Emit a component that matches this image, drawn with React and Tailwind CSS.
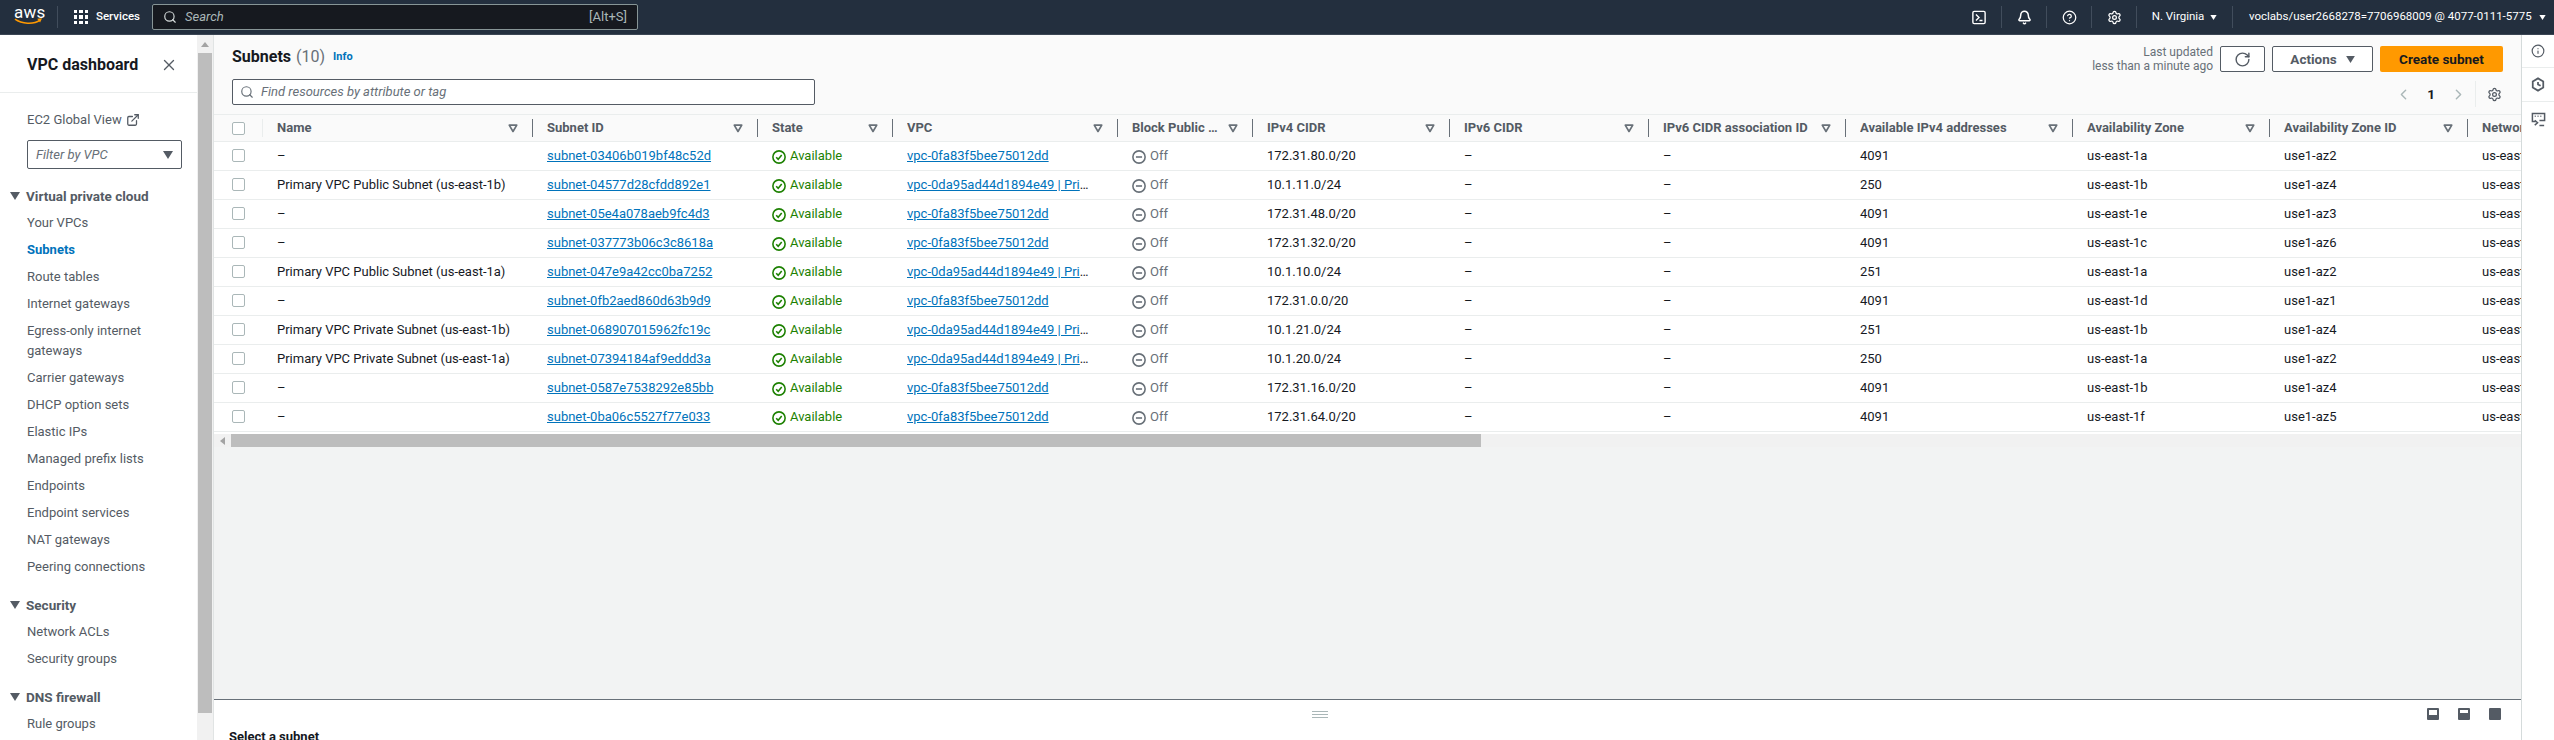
import { Search, X, ExternalLink, RotateCw, Settings, ChevronLeft, ChevronRight, Bell, CircleHelp, Info } from 'lucide-react'

const columns = [
  { label: 'Name', w: 'w-[270px]' },
  { label: 'Subnet ID', w: 'w-[225px]' },
  { label: 'State', w: 'w-[135px]' },
  { label: 'VPC', w: 'w-[225px]' },
  { label: 'Block Public Access', w: 'w-[135px]' },
  { label: 'IPv4 CIDR', w: 'w-[197px]' },
  { label: 'IPv6 CIDR', w: 'w-[199px]' },
  { label: 'IPv6 CIDR association ID', w: 'w-[197px]' },
  { label: 'Available IPv4 addresses', w: 'w-[227px]' },
  { label: 'Availability Zone', w: 'w-[197px]' },
  { label: 'Availability Zone ID', w: 'w-[198px]' },
  { label: 'Network border group', w: 'w-[200px]' },
]

const vpcA = 'vpc-0fa83f5bee75012dd'
const vpcB = 'vpc-0da95ad44d1894e49 | Primary VPC'

const subnets = [
  ['–', 'subnet-03406b019bf48c52d', vpcA, '172.31.80.0/20', '4091', 'us-east-1a', 'use1-az2'],
  ['Primary VPC Public Subnet (us-east-1b)', 'subnet-04577d28cfdd892e1', vpcB, '10.1.11.0/24', '250', 'us-east-1b', 'use1-az4'],
  ['–', 'subnet-05e4a078aeb9fc4d3', vpcA, '172.31.48.0/20', '4091', 'us-east-1e', 'use1-az3'],
  ['–', 'subnet-037773b06c3c8618a', vpcA, '172.31.32.0/20', '4091', 'us-east-1c', 'use1-az6'],
  ['Primary VPC Public Subnet (us-east-1a)', 'subnet-047e9a42cc0ba7252', vpcB, '10.1.10.0/24', '251', 'us-east-1a', 'use1-az2'],
  ['–', 'subnet-0fb2aed860d63b9d9', vpcA, '172.31.0.0/20', '4091', 'us-east-1d', 'use1-az1'],
  ['Primary VPC Private Subnet (us-east-1b)', 'subnet-068907015962fc19c', vpcB, '10.1.21.0/24', '251', 'us-east-1b', 'use1-az4'],
  ['Primary VPC Private Subnet (us-east-1a)', 'subnet-07394184af9eddd3a', vpcB, '10.1.20.0/24', '250', 'us-east-1a', 'use1-az2'],
  ['–', 'subnet-0587e7538292e85bb', vpcA, '172.31.16.0/20', '4091', 'us-east-1b', 'use1-az4'],
  ['–', 'subnet-0ba06c5527f77e033', vpcA, '172.31.64.0/20', '4091', 'us-east-1f', 'use1-az5'],
]

function Caret({ className }) {
  return (
    <svg viewBox="0 0 10 8" className={className}>
      <path d="M0 0h10L5 8z" fill="currentColor" />
    </svg>
  )
}

function Funnel() {
  return (
    <svg viewBox="0 0 12 10" className="w-[10px] h-[9px] shrink-0 text-[#687078]">
      <path d="M1.500 1h9L6 8.600z" fill="none" stroke="currentColor" strokeWidth="2" strokeLinejoin="round" />
    </svg>
  )
}

function Gear({ className }) {
  return <Settings className={className} strokeWidth={2} />
}

function Checkbox() {
  return <div className="w-[13px] h-[13px] rounded-[2px] border border-[#aab7b8] bg-white" />
}

function NavItem({ children, active }) {
  return (
    <div className={`pl-[27px] leading-[20px] ${active ? 'font-bold text-[#0073bb]' : 'text-[#545b64]'}`}>
      {children}
    </div>
  )
}

function NavSection({ title, items, activeItem }) {
  return (
    <div className="flex flex-col gap-[7px] mb-[18px]">
      <div className="flex items-center h-[20px]">
        <Caret className="w-[10px] h-[8px] ml-[10px] mr-[6px] text-[#545b64]" />
        <span className="font-bold text-[13.5px] text-[#545b64]">{title}</span>
      </div>
      {items.map(item => (
        <NavItem key={item} active={item === activeItem}>{item}</NavItem>
      ))}
    </div>
  )
}

function TopIcon({ children }) {
  return (
    <div className="w-[45px] h-[22px] flex items-center justify-center border-r border-[#414d5c]">
      {children}
    </div>
  )
}

function TopBar() {
  return (
    <header className="h-[35px] shrink-0 flex items-center bg-[#232f3e] border-b border-[#3b4654] text-white text-[11.5px]">
      <div className="w-[57px] pl-[14px] h-full flex flex-col justify-center">
        <div className="leading-[13px] text-[17px] -mt-[4px] tracking-[0.3px]">aws</div>
        <svg viewBox="0 0 30 7" className="w-[29px] h-[7px] -mt-[1px]">
          <path d="M1 1c7 5 19 6 26 1" fill="none" stroke="#ff9900" strokeWidth="1.600" />
          <path d="M24 0.600l5-.4-2 4.400z" fill="#ff9900" />
        </svg>
      </div>
      <div className="w-px h-[22px] bg-[#414d5c]" />
      <div className="ml-[16px] grid grid-cols-3 gap-[2px] w-[14px]">
        {Array.from({ length: 9 }).map((_, i) => <div key={i} className="w-[3.4px] h-[3.4px] bg-white" />)}
      </div>
      <span className="ml-[8px] w-[56px] font-medium">Services</span>
      <div className="w-[486px] h-[26px] flex items-center rounded-[2px] border border-[#879596] bg-[#16191f] px-[10px] text-[#aab7b8]">
        <Search size={14} strokeWidth={2} className="text-[#d5dbdb]" />
        <span className="ml-[8px] italic text-[13px]">Search</span>
        <span className="ml-auto text-[13px]">[Alt+S]</span>
      </div>
      <div className="flex-1" />
      <TopIcon>
        <svg viewBox="0 0 16 16" className="w-[14px] h-[15px]" fill="none" stroke="white" strokeWidth="1.600">
          <rect x="1" y="1" width="14" height="14" rx="1.500" />
          <path d="M4.500 4.500L8 8l-3.500 3.500M8.500 11.500H12" />
        </svg>
      </TopIcon>
      <TopIcon><Bell size={15} strokeWidth={2.4} /></TopIcon>
      <TopIcon><CircleHelp size={15} strokeWidth={2} /></TopIcon>
      <TopIcon><Gear className="w-[15px] h-[15px]" /></TopIcon>
      <div className="w-[96px] h-[22px] flex items-center justify-center gap-[6px] border-r border-[#414d5c]">
        <span>N. Virginia</span>
        <Caret className="w-[7px] h-[5px]" />
      </div>
      <div className="w-[321px] shrink-0 flex items-center pl-[16px] whitespace-nowrap">
        <span>voclabs/user2668278=7706968009 @ 4077-0111-5775</span>
        <Caret className="w-[7px] h-[5px] ml-[7px]" />
      </div>
    </header>
  )
}

function Sidebar() {
  return (
    <aside className="w-[197px] shrink-0 bg-white text-[13px] overflow-hidden">
      <div className="h-[58px] flex items-center justify-between pl-[27px] pr-[19px] border-b border-[#eaeded] pt-[2px]">
        <span className="text-[16px] font-bold text-[#16191f] whitespace-nowrap">VPC dashboard</span>
        <X size={18} strokeWidth={1.8} className="text-[#545b64]" />
      </div>
      <div className="pl-[27px] pt-[17px] flex items-center gap-[4px] text-[#545b64] leading-[20px]">
        EC2 Global View
        <ExternalLink size={14} strokeWidth={2.2} />
      </div>
      <div className="ml-[27px] w-[155px] h-[29px] mt-[10px] px-[8px] flex items-center justify-between rounded-[2px] border border-[#545b64] italic text-[#687078]">
        Filter by VPC
        <Caret className="w-[10px] h-[8px] text-[#545b64]" />
      </div>
      <div className="mt-[17px]">
        <NavSection
          title="Virtual private cloud"
          activeItem="Subnets"
          items={['Your VPCs', 'Subnets', 'Route tables', 'Internet gateways', 'Egress-only internet gateways', 'Carrier gateways', 'DHCP option sets', 'Elastic IPs', 'Managed prefix lists', 'Endpoints', 'Endpoint services', 'NAT gateways', 'Peering connections']}
        />
        <NavSection title="Security" items={['Network ACLs', 'Security groups']} />
        <NavSection title="DNS firewall" items={['Rule groups']} />
      </div>
    </aside>
  )
}

function VScrollbar() {
  return (
    <div className="w-[17px] shrink-0 bg-[#f1f1f1] border-r border-[#e1e4e4] flex flex-col items-center pt-[7px]">
      <div className="w-0 h-0 border-x-[4px] border-x-transparent border-b-[5px] border-b-[#a3a3a3]" />
      <div className="w-[14px] h-[660px] mt-[6px] bg-[#bdbdbd]" />
    </div>
  )
}

function Status() {
  return (
    <span className="flex items-center gap-[4px] text-[#1d8102]">
      <svg viewBox="0 0 16 16" className="w-[14px] h-[14px] mt-[3px] shrink-0" fill="none" stroke="currentColor" strokeWidth="1.800">
        <circle cx="8" cy="8" r="7" />
        <path d="M4.800 8.200l2.300 2.400 4-4.800" />
      </svg>
      Available
    </span>
  )
}

function BlockOff() {
  return (
    <span className="flex items-center gap-[4px] text-[#687078]">
      <svg viewBox="0 0 16 16" className="w-[14px] h-[14px] mt-[3px] shrink-0" fill="none" stroke="currentColor" strokeWidth="1.800">
        <circle cx="8" cy="8" r="7" />
        <path d="M4.500 8h7" />
      </svg>
      Off
    </span>
  )
}

function Cell({ w, children, className = '' }) {
  return <div className={`${w} shrink-0 pl-[14px] whitespace-nowrap ${className}`}>{children}</div>
}

function Link({ children }) {
  return <span className="text-[#0073bb] underline">{children}</span>
}

function SubnetTable() {
  return (
    <div className="shrink-0 w-[2307px] overflow-hidden text-[13px]">
      <div className="flex h-[28px] items-center bg-[#fafafa] border-y border-[#eaeded] font-bold text-[#545b64]">
        <div className="w-[49px] shrink-0 pl-[18px] h-[18px] flex items-center border-r border-[#eaeded]"><Checkbox /></div>
        {columns.map((c, i) => (
          <div key={c.label} className={`${c.w} shrink-0 h-[18px] flex items-center pl-[14px]`}>
            <span className="flex-1 min-w-0 truncate">{c.label}</span>
            {i < 11 && (
              <>
                <span className="ml-[6px]"><Funnel /></span>
                <span className="ml-[14px] w-px h-[18px] bg-[#687078]" />
              </>
            )}
          </div>
        ))}
      </div>
      {subnets.map(s => (
        <div key={s[1]} className="flex h-[29px] items-center pb-px bg-white border-b border-[#eaeded] text-[#16191f]">
          <div className="w-[49px] shrink-0 pl-[18px]"><Checkbox /></div>
          <Cell w="w-[270px]">{s[0]}</Cell>
          <Cell w="w-[225px]"><Link>{s[1]}</Link></Cell>
          <Cell w="w-[135px]"><Status /></Cell>
          <Cell w="w-[225px]" className="pr-[24px] truncate"><Link>{s[2]}</Link></Cell>
          <Cell w="w-[135px]"><BlockOff /></Cell>
          <Cell w="w-[197px]">{s[3]}</Cell>
          <Cell w="w-[199px]">–</Cell>
          <Cell w="w-[197px]">–</Cell>
          <Cell w="w-[227px]">{s[4]}</Cell>
          <Cell w="w-[197px]">{s[5]}</Cell>
          <Cell w="w-[198px]">{s[6]}</Cell>
          <Cell w="w-[200px]">us-east-1</Cell>
        </div>
      ))}
      <div className="flex items-center h-[13px] mt-[2px] bg-[#f1f1f1]">
        <div className="w-[17px] flex justify-center">
          <div className="w-0 h-0 border-y-[4px] border-y-transparent border-r-[5px] border-r-[#a3a3a3]" />
        </div>
        <div className="w-[1250px] h-[13px] bg-[#bdbdbd]" />
      </div>
    </div>
  )
}

function Toolbar() {
  return (
    <div className="h-[79px] shrink-0 bg-[#fafafa] flex pl-[18px] pr-[18px]">
      <div className="flex-1 flex flex-col">
        <div className="mt-[12px] h-[20px] flex items-center">
          <span className="text-[16px] font-bold text-[#16191f]">Subnets</span>
          <span className="ml-[5px] text-[16px] text-[#687078]">(10)</span>
          <span className="ml-[8px] text-[11px] font-bold text-[#0073bb]">Info</span>
        </div>
        <div className="mt-[12px] w-[583px] h-[26px] flex items-center rounded-[2px] border border-[#545b64] bg-white px-[7px] italic text-[13px] text-[#687078]">
          <Search size={14} strokeWidth={2} className="text-[#687078]" />
          <span className="ml-[7px]">Find resources by attribute or tag</span>
        </div>
      </div>
      <div className="flex flex-col items-end">
        <div className="mt-[10px] flex items-center">
          <div className="text-right text-[12px] leading-[14px] text-[#687078] mr-[7px]">
            <div>Last updated</div>
            <div>less than a minute ago</div>
          </div>
          <div className="w-[45px] h-[26px] flex items-center justify-center rounded-[2px] border border-[#545b64] bg-white text-[#545b64]">
            <RotateCw size={17} strokeWidth={2} />
          </div>
          <div className="ml-[7px] w-[101px] h-[26px] flex items-center justify-center gap-[9px] rounded-[2px] border border-[#545b64] bg-white text-[13.5px] font-bold text-[#545b64]">
            Actions
            <Caret className="w-[9px] h-[7px]" />
          </div>
          <div className="ml-[7px] w-[123px] h-[26px] flex items-center justify-center rounded-[2px] bg-[#ff9900] text-[13.5px] font-bold text-[#16191f]">
            Create subnet
          </div>
        </div>
        <div className="mt-[8px] flex items-center h-[26px] pr-px">
          <ChevronLeft size={17} className="text-[#aab7b8]" />
          <span className="mx-[15px] text-[13.5px] font-bold text-[#16191f]">1</span>
          <ChevronRight size={17} className="text-[#aab7b8]" />
          <div className="ml-[8px] w-px h-[26px] bg-[#eaeded]" />
          <Gear className="ml-[11px] w-[15px] h-[15px] text-[#545b64]" />
        </div>
      </div>
    </div>
  )
}

function SplitIcon({ fill }) {
  return (
    <div className="w-[12px] h-[12px] flex flex-col justify-end rounded-[1px] border-2 border-[#545b64] bg-white">
      <div className={`${fill} bg-[#545b64]`} />
    </div>
  )
}

function RightRail() {
  return (
    <div className="w-[33px] shrink-0 bg-white border-l border-[#d5dbdb] flex flex-col text-[#545b64]">
      <div className="h-[33px] flex items-center justify-center border-b border-[#eaeded]"><Info size={14} strokeWidth={2} /></div>
      <div className="h-[34px] flex items-center justify-center border-b border-[#eaeded]">
        <svg viewBox="0 0 16 16" className="w-[14px] h-[15px]" fill="none" stroke="currentColor" strokeWidth="2">
          <path d="M8 1l6 3.500v7L8 15l-6-3.500v-7z" />
          <path d="M8 5v3l3 1.500" />
        </svg>
      </div>
      <div className="h-[34px] flex items-center justify-center">
        <svg viewBox="0 0 16 16" className="w-[15px] h-[15px]" fill="none" stroke="currentColor" strokeWidth="1.600">
          <path d="M5 10H1.500V1.500h13V9H9" />
          <path d="M4 4.500h1M7 4.500h1M10 4.500h1M4 9l3 2.500L4 14M9 14.500h5" />
        </svg>
      </div>
    </div>
  )
}

export default function App() {
  return (
    <div className="w-[2554px] h-[740px] overflow-hidden flex flex-col bg-white font-['Roboto','Liberation_Sans',sans-serif] text-[13px]">
      <TopBar />
      <div className="flex-1 min-h-0 flex">
        <Sidebar />
        <VScrollbar />
        <main className="w-[2307px] shrink-0 flex flex-col">
          <Toolbar />
          <SubnetTable />
          <div className="flex-1 bg-[#f2f3f3]" />
          <div className="h-[41px] shrink-0 border-t border-[#687078] bg-white pl-[15px] relative">
            <div className="flex h-[28px] items-center">
              <div className="ml-[1083px] w-[16px] flex flex-col gap-[2px]">
                <div className="h-[1px] bg-[#aab7b8]" />
                <div className="h-[1px] bg-[#aab7b8]" />
                <div className="h-[1px] bg-[#aab7b8]" />
              </div>
              <div className="ml-auto mr-[20px] flex gap-[19px]">
                <SplitIcon fill="h-[3px]" />
                <SplitIcon fill="h-[5px]" />
                <SplitIcon fill="h-[8px]" />
              </div>
            </div>
            <div className="font-bold text-[#16191f] leading-[16px] mt-[1px]">Select a subnet</div>
          </div>
        </main>
        <RightRail />
      </div>
    </div>
  )
}
